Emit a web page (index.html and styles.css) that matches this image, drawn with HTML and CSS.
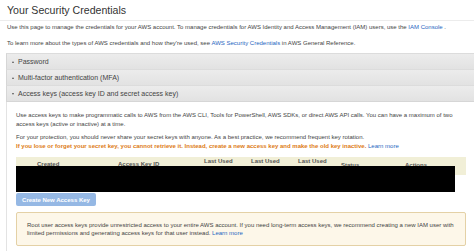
FILE: index.html
```html
<!DOCTYPE html>
<html>

<head>
    <meta charset="UTF-8">
    <title>Your Security Credentials</title>
    <link rel="stylesheet" href="styles.css">
</head>

<body>

    <div class="page-head">
        <h1>Your Security Credentials</h1>
    </div>
    <p class="intro">Use this page to manage the credentials for your AWS account. To manage credentials for AWS Identity and Access Management (IAM) users, use the <a href="#">IAM Console</a> .</p>
    <p class="intro">To learn more about the types of AWS credentials and how they're used, see <a href="#">AWS Security Credentials</a> in AWS General Reference.</p>

    <div class="sections">
        <div class="section-bar closed"><i class="arrow"></i>Password</div>
        <div class="section-bar closed"><i class="arrow"></i>Multi-factor authentication (MFA)</div>
        <div class="section-bar open"><i class="arrow"></i>Access keys (access key ID and secret access key)</div>

        <div class="section-body">
            <p>Use access keys to make programmatic calls to AWS from the AWS CLI, Tools for PowerShell, AWS SDKs, or direct AWS API calls. You can have a maximum of two access keys (active or inactive) at a time.</p>
            <p class="gap">For your protection, you should never share your secret keys with anyone. As a best practice, we recommend frequent key rotation.</p>
            <p class="warn">If you lose or forget your secret key, you cannot retrieve it. Instead, create a new access key and make the old key inactive. <a href="#">Learn more</a></p>

            <div class="key-table">
                <div class="key-head">
                    <span class="col-created">Created</span>
                    <span class="col-id">Access Key ID</span>
                    <span class="col-used">Last Used</span>
                    <span class="col-used">Last Used</span>
                    <span class="col-used">Last Used</span>
                    <span class="col-status">Status</span>
                    <span class="col-actions">Actions</span>
                </div>
                <div class="key-rows"></div>
            </div>

            <button class="btn-create" disabled>Create New Access Key</button>

            <div class="notice">
                Root user access keys provide unrestricted access to your entire AWS account. If you need long-term access keys, we recommend creating a new IAM user with limited permissions and generating access keys for that user instead. <a href="#">Learn more</a>
            </div>
        </div>
    </div>

</body>

</html>
```

FILE: styles.css
```css
html,
body {
    margin: 0;
    padding: 0;
    background: #fff;
    overflow: hidden;
}

body {
    font-family: "Liberation Sans", Arial, sans-serif;
    font-size: 6px;
    color: #444;
}

a {
    color: #1f66c1;
    text-decoration: none;
}

.page-head {
    border-bottom: 1px solid #ececec;
    padding: 3px 7px 2px;
}

h1 {
    margin: 0;
    font-size: 10.6px;
    font-weight: normal;
    color: #333;
    line-height: 15px;
}

.intro {
    margin: 0;
    padding: 0 7px;
    line-height: 8px;
    white-space: nowrap;
}

.intro + .intro {
    margin-top: 8px;
}

.intro:first-of-type {
    margin-top: 2px;
}

.sections {
    margin: 6px -20px 0 6px;
}

.section-bar {
    height: 15px;
    line-height: 15px;
    font-size: 7px;
    color: #444;
    background: linear-gradient(#ececec, #e2e2e2);
    border: 1px solid #d6d6d6;
    border-top-color: #dcdcdc;
    margin-bottom: -1px;
    padding-left: 5px;
}

.arrow {
    display: inline-block;
    width: 0;
    height: 0;
    margin-right: 4px;
    border: 2px solid transparent;
    vertical-align: 1px;
}

.closed .arrow {
    border-bottom-color: #555;
    border-top-width: 0;
    border-left-width: 1.5px;
    border-right-width: 1.5px;
}

.open .arrow {
    border-top-color: #555;
    border-bottom-width: 0;
    border-left-width: 1.5px;
    border-right-width: 1.5px;
}

.section-body {
    border: 1px solid #e3e3e3;
    border-top: 0;
    margin-top: 1px;
    padding: 9px 9px 6px 9px;
    height: 160px;
    box-sizing: border-box;
}

.section-body p {
    margin: 0;
    line-height: 9px;
    width: 440px;
}

.section-body p.gap {
    margin-top: 4px;
}

.section-body p.warn {
    color: #dd7b16;
    font-weight: bold;
    width: 460px;
}

.section-body p.warn a {
    font-weight: normal;
}

.key-table {
    margin-top: 6px;
    width: 450px;
}

.key-head {
    background: #f1efd7;
    height: 18px;
    position: relative;
    font-weight: bold;
    color: #555;
    font-size: 6px;
}

.key-head span {
    position: absolute;
    line-height: 8px;
}

.key-head .col-created { left: 21px; top: 3px; }
.key-head .col-id { left: 102px; top: 3px; }
.key-head .col-used:nth-child(3) { left: 188px; top: 0; }
.key-head .col-used:nth-child(4) { left: 235px; top: 0; }
.key-head .col-used:nth-child(5) { left: 282px; top: 0; }
.key-head .col-status { left: 325px; top: 4px; }
.key-head .col-actions { left: 389px; top: 4px; }

.key-rows {
    background: #000;
    height: 26px;
    margin-top: -9px;
    width: 439px;
    position: relative;
}

.btn-create {
    display: block;
    margin-top: 1px;
    height: 13px;
    padding: 0 6px;
    border: 0;
    border-radius: 2px;
    background: #95b8e4;
    color: #fff;
    font-family: "Liberation Sans", Arial, sans-serif;
    font-size: 6px;
    font-weight: bold;
    width: 80px;
}

.notice {
    margin-top: 6px;
    width: 450px;
    box-sizing: border-box;
    background: #fdf7e9;
    border: 1px solid #e4d1a6;
    border-radius: 2px;
    padding: 8px 9px 8px 10px;
    line-height: 8px;
    color: #444;
}
```
